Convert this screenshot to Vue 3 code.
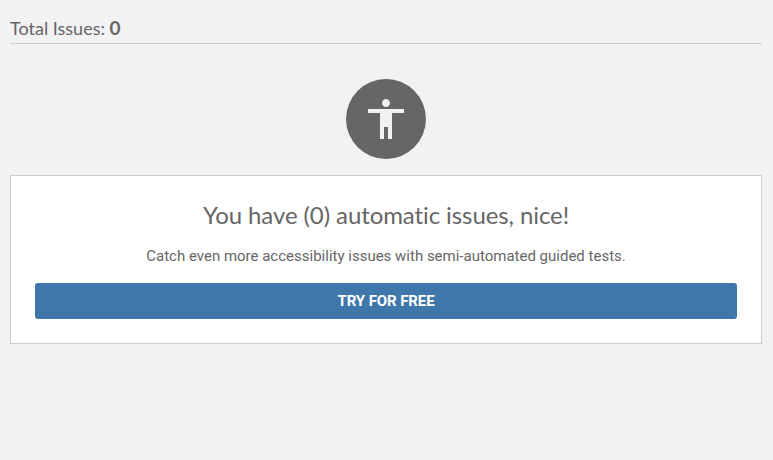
<script setup>
const total = 0
</script>

<template>
  <main class="page">
    <h2 class="total">Total Issues: <strong>{{ total }}</strong></h2>
    <div class="badge">
      <svg viewBox="0 0 80 80" width="80" height="80" aria-hidden="true">
        <circle cx="40" cy="40" r="40" fill="#666" />
        <path transform="translate(16 16) scale(2)" fill="#f2f2f2" d="M12 2c1.1 0 2 .9 2 2s-.9 2-2 2-2-.9-2-2 .9-2 2-2zm9 7h-6v13h-2v-6h-2v6H9V9H3V7h18v2z" />
      </svg>
    </div>
    <section class="card">
      <h3>You have ({{ total }}) automatic issues, nice!</h3>
      <p>Catch even more accessibility issues with semi-automated guided tests.</p>
      <button type="button">TRY FOR FREE</button>
    </section>
  </main>
</template>

<style>
body { background: #f2f2f2; }
</style>

<style scoped>
.page { padding: 16px 11px 0 10px; font-family: Roboto, sans-serif; color: #666; }
.total { margin: 0; height: 27px; border-bottom: 1px solid #ccc; font: 400 18px/24px Lato, sans-serif; }
.total strong { font-weight: 700; font-size: 19px; line-height: 1; }
.badge { display: flex; justify-content: center; padding: 35px 0 16px; }
.badge svg { display: block; }
.card { box-sizing: border-box; height: 169px; padding: 24px; border: 1px solid #ccc; background: #fff; text-align: center; }
h3 { margin: 0; font: 400 24px/30px Lato, sans-serif; letter-spacing: -0.09px; font-variant-ligatures: none; }
p { margin: 16px 0 17px; font-size: 15px; line-height: 20px; }
button { display: block; width: 100%; height: 36px; padding: 0; border: 0; border-radius: 3px; background: #4077ab; color: #fff; font: 700 15px/36px Roboto, sans-serif; letter-spacing: -0.1px; }
</style>
